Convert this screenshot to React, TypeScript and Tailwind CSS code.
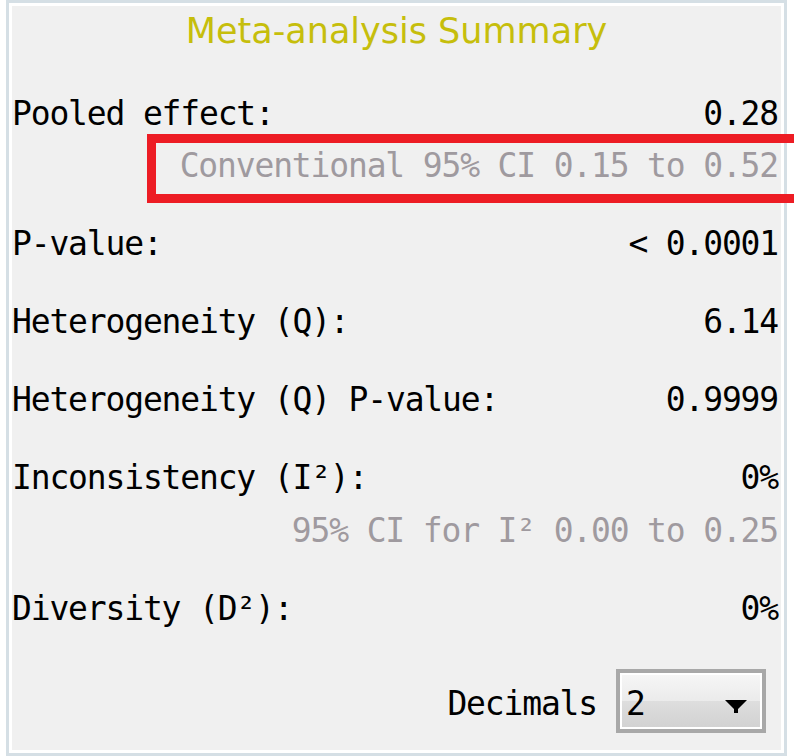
import React from "react";

const mono = "font-['DejaVu_Sans_Mono',monospace] text-[33px] leading-[40px] tracking-[-1.17px]";

function Row({ label, value }: { label: string; value: string }) {
  return (
    <div className={`flex justify-between h-[40px] text-black ${mono}`}>
      <span className="whitespace-pre">{label}</span>
      <span className="whitespace-pre">{value}</span>
    </div>
  );
}

function Sub({ text }: { text: string }) {
  return (
    <div className={`flex justify-end h-[40px] text-[#9f9a9f] ${mono}`}>
      <span className="whitespace-pre">{text}</span>
    </div>
  );
}

export default function App() {
  return (
    <div className="relative w-[794px] h-[756px] bg-white overflow-hidden">
      <div className="ml-[6px] w-[781px] h-[756px] border-[3px] border-[#d5dfe5]">
        <div className="h-full border-[3px] border-white bg-[#f0f0f0] flex flex-col">
          <div className="mt-[5px] h-[40px] text-center font-['DejaVu_Sans',sans-serif] text-[35px] leading-[40px] text-[#c6be0c]">
            Meta-analysis Summary
          </div>
          <div className="mt-[43px] pl-[0px] pr-[3px] flex flex-col gap-[38px]">
            <div className="flex flex-col gap-[12px]">
              <Row label="Pooled effect:" value="0.28" />
              <Sub text="Conventional 95% CI 0.15 to 0.52" />
            </div>
            <Row label="P-value:" value="< 0.0001" />
            <div className="-mt-[0px]">
              <Row label="Heterogeneity (Q):" value="6.14" />
            </div>
            <Row label="Heterogeneity (Q) P-value:" value="0.9999" />
            <div className="flex flex-col gap-[13px]">
              <Row label="Inconsistency (I²):" value="0%" />
              <Sub text="95% CI for I² 0.00 to 0.25" />
            </div>
            <Row label="Diversity (D²):" value="0%" />
          </div>
          <div className="mt-[40px] flex justify-end items-center pr-[15px]">
            <span className={`text-black mt-[5px] ${mono}`}>Decimals</span>
            <div className="ml-[19px] w-[150px] h-[64px] border-[4px] border-[#a8a8a8] p-[2px] bg-white">
              <div className="h-full flex flex-col bg-white">
                <div className="flex-1 bg-gradient-to-b from-[#f6f6f6] to-[#ebebeb]" />
                <div className="flex-1 bg-gradient-to-b from-[#dedede] to-[#d2d2d2]" />
              </div>
            </div>
          </div>
        </div>
      </div>
      {/* dropdown content overlay */}
      <div className={`absolute left-[626px] top-[684px] text-black ${mono}`}>2</div>
      <svg className="absolute left-[725px] top-[700px]" width="22" height="13" viewBox="0 0 22 13">
        <polygon points="0,0 22,0 13,9 13,13 9,13 9,9" fill="#000" />
      </svg>
      {/* red annotation box */}
      <div className="absolute left-[147px] top-[134px] w-[670px] h-[69px] border-[9px] border-[#ed1c24]" />
    </div>
  );
}
